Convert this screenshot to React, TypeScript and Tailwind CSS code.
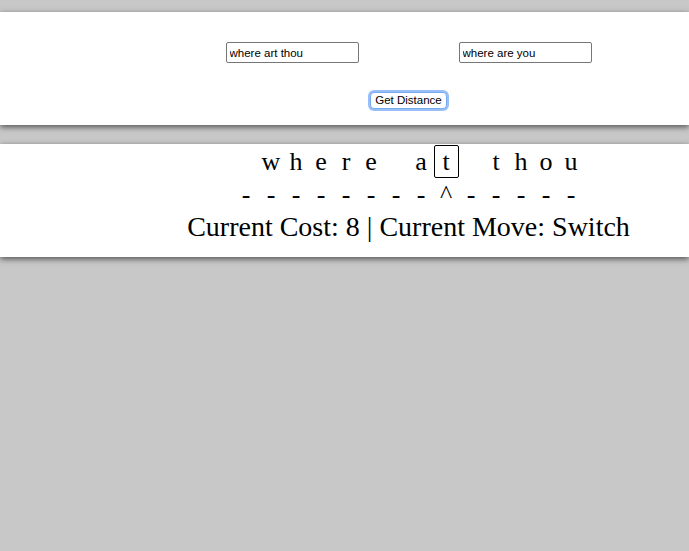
import { useState } from "react";

const top = " where at thou".split("");
const marks = "--------^-----".split("");

export default function App() {
  const [source, setSource] = useState("where art thou");
  const [target, setTarget] = useState("where are you");

  return (
    <div className="min-h-screen overflow-hidden bg-[#c8c8c8] pt-[12px]">
      <div className="h-[113px] bg-white pl-[128px] pt-[30px] shadow-[0_2px_6px_rgba(0,0,0,0.6)] font-['Liberation_Sans',Arial,sans-serif]">
        <div className="flex justify-center gap-[100px]">
          <input
            value={source}
            onChange={(e) => setSource(e.target.value)}
            className="h-[21px] w-[133px] rounded-[2px] border border-[#767676] bg-white px-[3px] text-[11.5px] text-black outline-none"
          />
          <input
            value={target}
            onChange={(e) => setTarget(e.target.value)}
            className="h-[21px] w-[133px] rounded-[2px] border border-[#767676] bg-white px-[3px] text-[11.5px] text-black outline-none"
          />
        </div>
        <div className="mt-[29px] flex justify-center">
          <button className="flex h-[17px] w-[77px] items-center justify-center rounded-[4px] border border-[#78aaf2] bg-white text-[11.5px] leading-none text-black shadow-[0_0_0_2px_#98bff6]">
            Get Distance
          </button>
        </div>
      </div>

      <div className="mt-[19px] h-[113px] bg-white pl-[128px] pt-[1px] text-black shadow-[0_2px_6px_rgba(0,0,0,0.6)] font-['Liberation_Serif','Times_New_Roman',serif]">
        <div className="flex justify-center text-[26px] leading-[33px]">
          {top.map((ch, i) => (
            <span
              key={i}
              className={`h-[33px] w-[25px] text-center ${i === 8 ? "rounded-[2px] border border-black leading-[31px]" : ""}`}
            >
              {ch === " " ? "\u00a0" : ch}
            </span>
          ))}
        </div>
        <div className="flex justify-center text-[26px] leading-[33px]">
          {marks.map((ch, i) => (
            <span key={i} className="w-[25px] text-center">
              {ch}
            </span>
          ))}
        </div>
        <div className="text-center text-[28px] leading-[32px]">Current Cost: 8 | Current Move: Switch</div>
      </div>
    </div>
  );
}
